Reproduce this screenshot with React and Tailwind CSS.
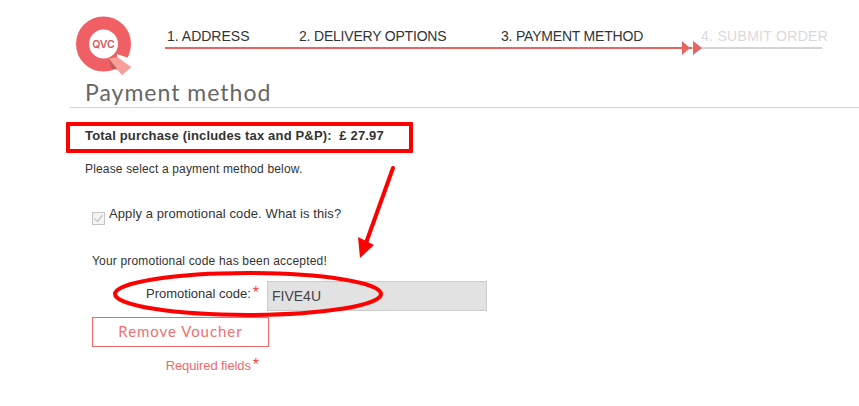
const steps = [
  { label: '1. ADDRESS', className: 'w-[132px] text-[#333]' },
  { label: '2. DELIVERY OPTIONS', className: 'w-[202px] tracking-[-0.2px] text-[#333]' },
  { label: '3. PAYMENT METHOD', className: 'w-[200px] tracking-[-0.2px] text-[#333]' },
  { label: '4. SUBMIT ORDER', className: 'w-[130px] tracking-[0.3px] text-[#d9d9d9]' }
];

function Logo() {
  return (
    <svg width="56" height="60" viewBox="0 0 56 60" className="shrink-0">
      <circle cx="27.5" cy="28" r="21" fill="none" stroke="#ef5f64" strokeWidth="13" />
      <path d="M41 38 L58 44 L56 52 L41 41 Z" fill="#ffffff" />
      <path d="M41 41 L55.3 51 L46 59.3 L32.7 42.7 Z" fill="#f7a099" />
      <path d="M32.7 42.7 L42 54 L35 52 Z" fill="#c25a5a" />
      <text x="27.5" y="32" textAnchor="middle" fontFamily="Inter, sans-serif" fontSize="10.5" fontWeight="600" fill="#d9565b">QVC</text>
    </svg>
  );
}

function Stepper() {
  return (
    <div className="w-[657px] ml-[33px] mt-[10px] font-['Liberation_Sans',sans-serif] text-sm">
      <div className="flex pl-[2px] h-[20px] items-center whitespace-nowrap">
        {steps.map((step) => (
          <span key={step.label} className={`shrink-0 ${step.className}`}>{step.label}</span>
        ))}
      </div>
      <div className="relative mt-[1px] h-[2px] bg-[#d4d4d4]">
        <div className="h-full w-[527px] bg-[#e8655f]" />
        <svg width="22" height="14" viewBox="0 0 22 14" className="absolute left-[517px] top-[-6px]">
          <path d="M0 0 L8 7 L0 14 Z M11 0 L20 7 L11 14 Z" fill="#e8655f" />
        </svg>
      </div>
    </div>
  );
}

export default function App() {
  return (
    <div className="relative h-[406px] w-full overflow-hidden bg-white font-['Liberation_Sans',sans-serif] text-xs text-[#333]">
      <div className="flex pl-[76px] pt-[16px] h-[76px]">
        <Logo />
        <Stepper />
      </div>

      <div className="ml-[70px] h-[32px] border-b border-[#d4d4d4] pl-[15px]">
        <h1 className="font-['Lato',sans-serif] text-[23px] leading-[33px] tracking-[1px] text-[#666]">Payment method</h1>
      </div>

      <div className="pl-[85px] pt-[20px]">
        <p className="text-[13px] font-bold leading-[16px] tracking-[0.17px] whitespace-pre">Total purchase (includes tax and P&amp;P):  £ 27.97</p>
        <p className="mt-[17px] leading-[16px] tracking-[0.16px]">Please select a payment method below.</p>
      </div>

      <div className="pl-[92px]">
        <label className="mt-[29px] flex items-start">
          <span className="mt-[6px] flex h-[13px] w-[13px] items-center justify-center border border-[#c4c4c4] bg-[#f4f4f4]">
            <svg width="11" height="11" viewBox="0 0 11 11">
              <path d="M1.5 5.5 L4.5 8.5 L9.5 2" fill="none" stroke="#c8c8c8" strokeWidth="1.4" />
            </svg>
          </span>
          <span className="ml-[4px] text-[13px] leading-[16px] tracking-[0.1px]">Apply a promotional code. What is this?</span>
        </label>

        <p className="mt-[28px] leading-[16px] tracking-[0.18px]">Your promotional code has been accepted!</p>

        <div className="mt-[12px] flex h-[30px]">
          <div className="flex w-[175px] justify-end pr-[8px] pt-[5px] text-[13px] leading-[16px]">
            <span>Promotional code:</span>
            <span className="ml-[2px] text-base leading-[14px] text-[#e8474c]">*</span>
          </div>
          <div className="flex w-[220px] items-center border border-[#cccccc] bg-[#e2e2e2] pl-[4px] text-sm text-[#444]">FIVE4U</div>
        </div>

        <button className="mt-[6px] block h-[30px] w-[177px] border border-[#ee6666] bg-white font-['Lato',sans-serif] text-[15px] tracking-[0.95px] text-[#ee7070]">
          Remove Voucher
        </button>

        <p className="mt-[11px] flex w-[175px] justify-end pr-[8px] text-[13px] leading-[16px] tracking-[-0.1px] text-[#ee6a6a]">
          <span>Required fields</span>
          <span className="ml-[2px] text-base leading-[14px] text-[#e8474c]">*</span>
        </p>
      </div>

      {/* red annotations drawn over the page */}
      <div className="absolute left-[66px] top-[122px] h-[31px] w-[347px] rounded-[1px] border-[4px] border-[#ff0000]" />
      <svg width="859" height="406" viewBox="0 0 859 406" className="pointer-events-none absolute left-0 top-0">
        <ellipse cx="248" cy="294" rx="133" ry="21" fill="none" stroke="#ff0000" strokeWidth="4" />
        <path d="M393 168 L366 243" stroke="#ff0000" strokeWidth="4" strokeLinecap="round" />
        <path d="M358 237 L374 245 L360 258 Z" fill="#ff0000" />
      </svg>
    </div>
  );
}
